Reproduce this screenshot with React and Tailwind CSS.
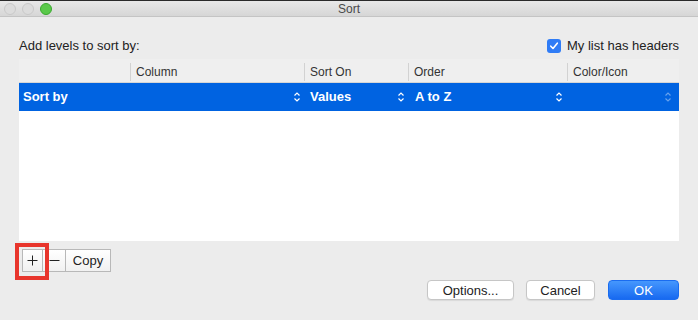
const font = { fontFamily: '"Liberation Sans", Arial, sans-serif' };

const UpDown = ({ faded = false }) => (
  <svg width="8" height="12" viewBox="0 0 8 12" className={faded ? 'opacity-40' : ''}>
    <path d="M1.5 4.5 L4 2 L6.5 4.5 M1.5 7.5 L4 10 L6.5 7.5" fill="none" stroke="white" strokeWidth="1.2" />
  </svg>
);

const columns = ['', 'Column', 'Sort On', 'Order', 'Color/Icon'];

const App = () => {
  return (
    <div className="w-[698px] h-[320px] bg-[#ececec] flex flex-col overflow-hidden text-[#222]" style={font}>
      {/* title bar */}
      <div className="h-[17px] shrink-0 border-t border-[#2a2a2a] border-b border-b-[#c4c4c4] bg-gradient-to-b from-[#e8e8e8] to-[#d6d6d6] relative flex items-center justify-center">
        <div className="absolute left-[4px] top-[2px] flex gap-[6px]">
          <span className="w-[12px] h-[12px] rounded-full border border-[#c9c9c9] bg-[#dcdcdc]" />
          <span className="w-[12px] h-[12px] rounded-full border border-[#c9c9c9] bg-[#dcdcdc]" />
          <span className="w-[12px] h-[12px] rounded-full border border-[#3aa92f] bg-[#5ac94a]" />
        </div>
        <span className="text-[12px] text-[#4a4a4a] leading-none">Sort</span>
      </div>

      <div className="px-[19px] flex flex-col">
        <div className="mt-[21px] h-[16px] flex items-center justify-between">
          <span className="text-[13px]">Add levels to sort by:</span>
          <label className="flex items-center gap-[6px]">
            <span className="w-[14px] h-[14px] rounded-[3px] bg-[#2f7cf6] flex items-center justify-center">
              <svg width="10" height="10" viewBox="0 0 10 10">
                <path d="M1.8 5.2 L4 7.5 L8.3 2.2" fill="none" stroke="white" strokeWidth="1.6" strokeLinecap="round" strokeLinejoin="round" />
              </svg>
            </span>
            <span className="text-[13px]">My list has headers</span>
          </label>
        </div>

        {/* table */}
        <div className="mt-[5px] h-[182px] bg-white flex flex-col">
          <div className="h-[24px] bg-[#efefef] border-b border-[#d6d6d6] grid grid-cols-[111px_174px_104px_159px_112px]">
            {columns.map((c, i) => (
              <div key={i} className={`flex items-center text-[12px] text-[#333] pl-[5px] my-[4px] ${i > 0 ? 'border-l border-[#d2d2d2]' : ''}`}>
                {c}
              </div>
            ))}
          </div>
          <div className="h-[28px] bg-[#0063e1] text-white font-bold text-[13px] grid grid-cols-[111px_174px_104px_159px_112px]">
            <div className="flex items-center pl-[4px]">Sort by</div>
            <div className="flex items-center justify-end pr-[3px]"><UpDown /></div>
            <div className="flex items-center justify-between pl-[6px] pr-[3px]">
              <span>Values</span>
              <UpDown />
            </div>
            <div className="flex items-center justify-between pl-[7px] pr-[4px]">
              <span>A to Z</span>
              <UpDown />
            </div>
            <div className="flex items-center justify-end pr-[7px]"><UpDown faded /></div>
          </div>
        </div>

        {/* add / remove / copy */}
        <div className="mt-[8px] ml-[3px] flex">
          <div className="relative flex h-[23px]">
            <button className="w-[21px] h-full border border-[#b8b8b8] bg-gradient-to-b from-white to-[#f1f1f1] flex items-center justify-center">
              <svg width="11" height="11" viewBox="0 0 11 11">
                <path d="M5.5 0.5 V10.5 M0.5 5.5 H10.5" stroke="#222" strokeWidth="1" />
              </svg>
            </button>
            <button className="w-[23px] h-full border-y border-r border-[#b8b8b8] bg-gradient-to-b from-white to-[#f1f1f1] flex items-center justify-center">
              <svg width="11" height="11" viewBox="0 0 11 11">
                <path d="M0.5 5.5 H10.5" stroke="#222" strokeWidth="1" />
              </svg>
            </button>
            <button className="w-[45px] h-full border-y border-r border-[#b8b8b8] bg-gradient-to-b from-white to-[#f1f1f1] text-[13px] flex items-center justify-center">
              Copy
            </button>
            <span className="absolute -left-[7px] -top-[6px] w-[34px] h-[37px] border-[4px] border-[#e8352c]" />
          </div>
        </div>

        {/* dialog buttons */}
        <div className="mt-[8px] flex justify-end gap-[12px]">
          <button className="w-[87px] h-[20px] rounded-[4px] bg-white border border-[#c6c6c6] shadow-[0_1px_1px_rgba(0,0,0,0.08)] text-[13px] leading-none">
            Options...
          </button>
          <button className="w-[69px] h-[20px] rounded-[4px] bg-white border border-[#c6c6c6] shadow-[0_1px_1px_rgba(0,0,0,0.08)] text-[13px] leading-none">
            Cancel
          </button>
          <button className="w-[71px] h-[20px] ml-[1px] rounded-[4px] bg-gradient-to-b from-[#4597fd] to-[#1769f0] border border-[#1a6cf0] text-white text-[13px] leading-none">
            OK
          </button>
        </div>
      </div>
    </div>
  );
};

export default App;
